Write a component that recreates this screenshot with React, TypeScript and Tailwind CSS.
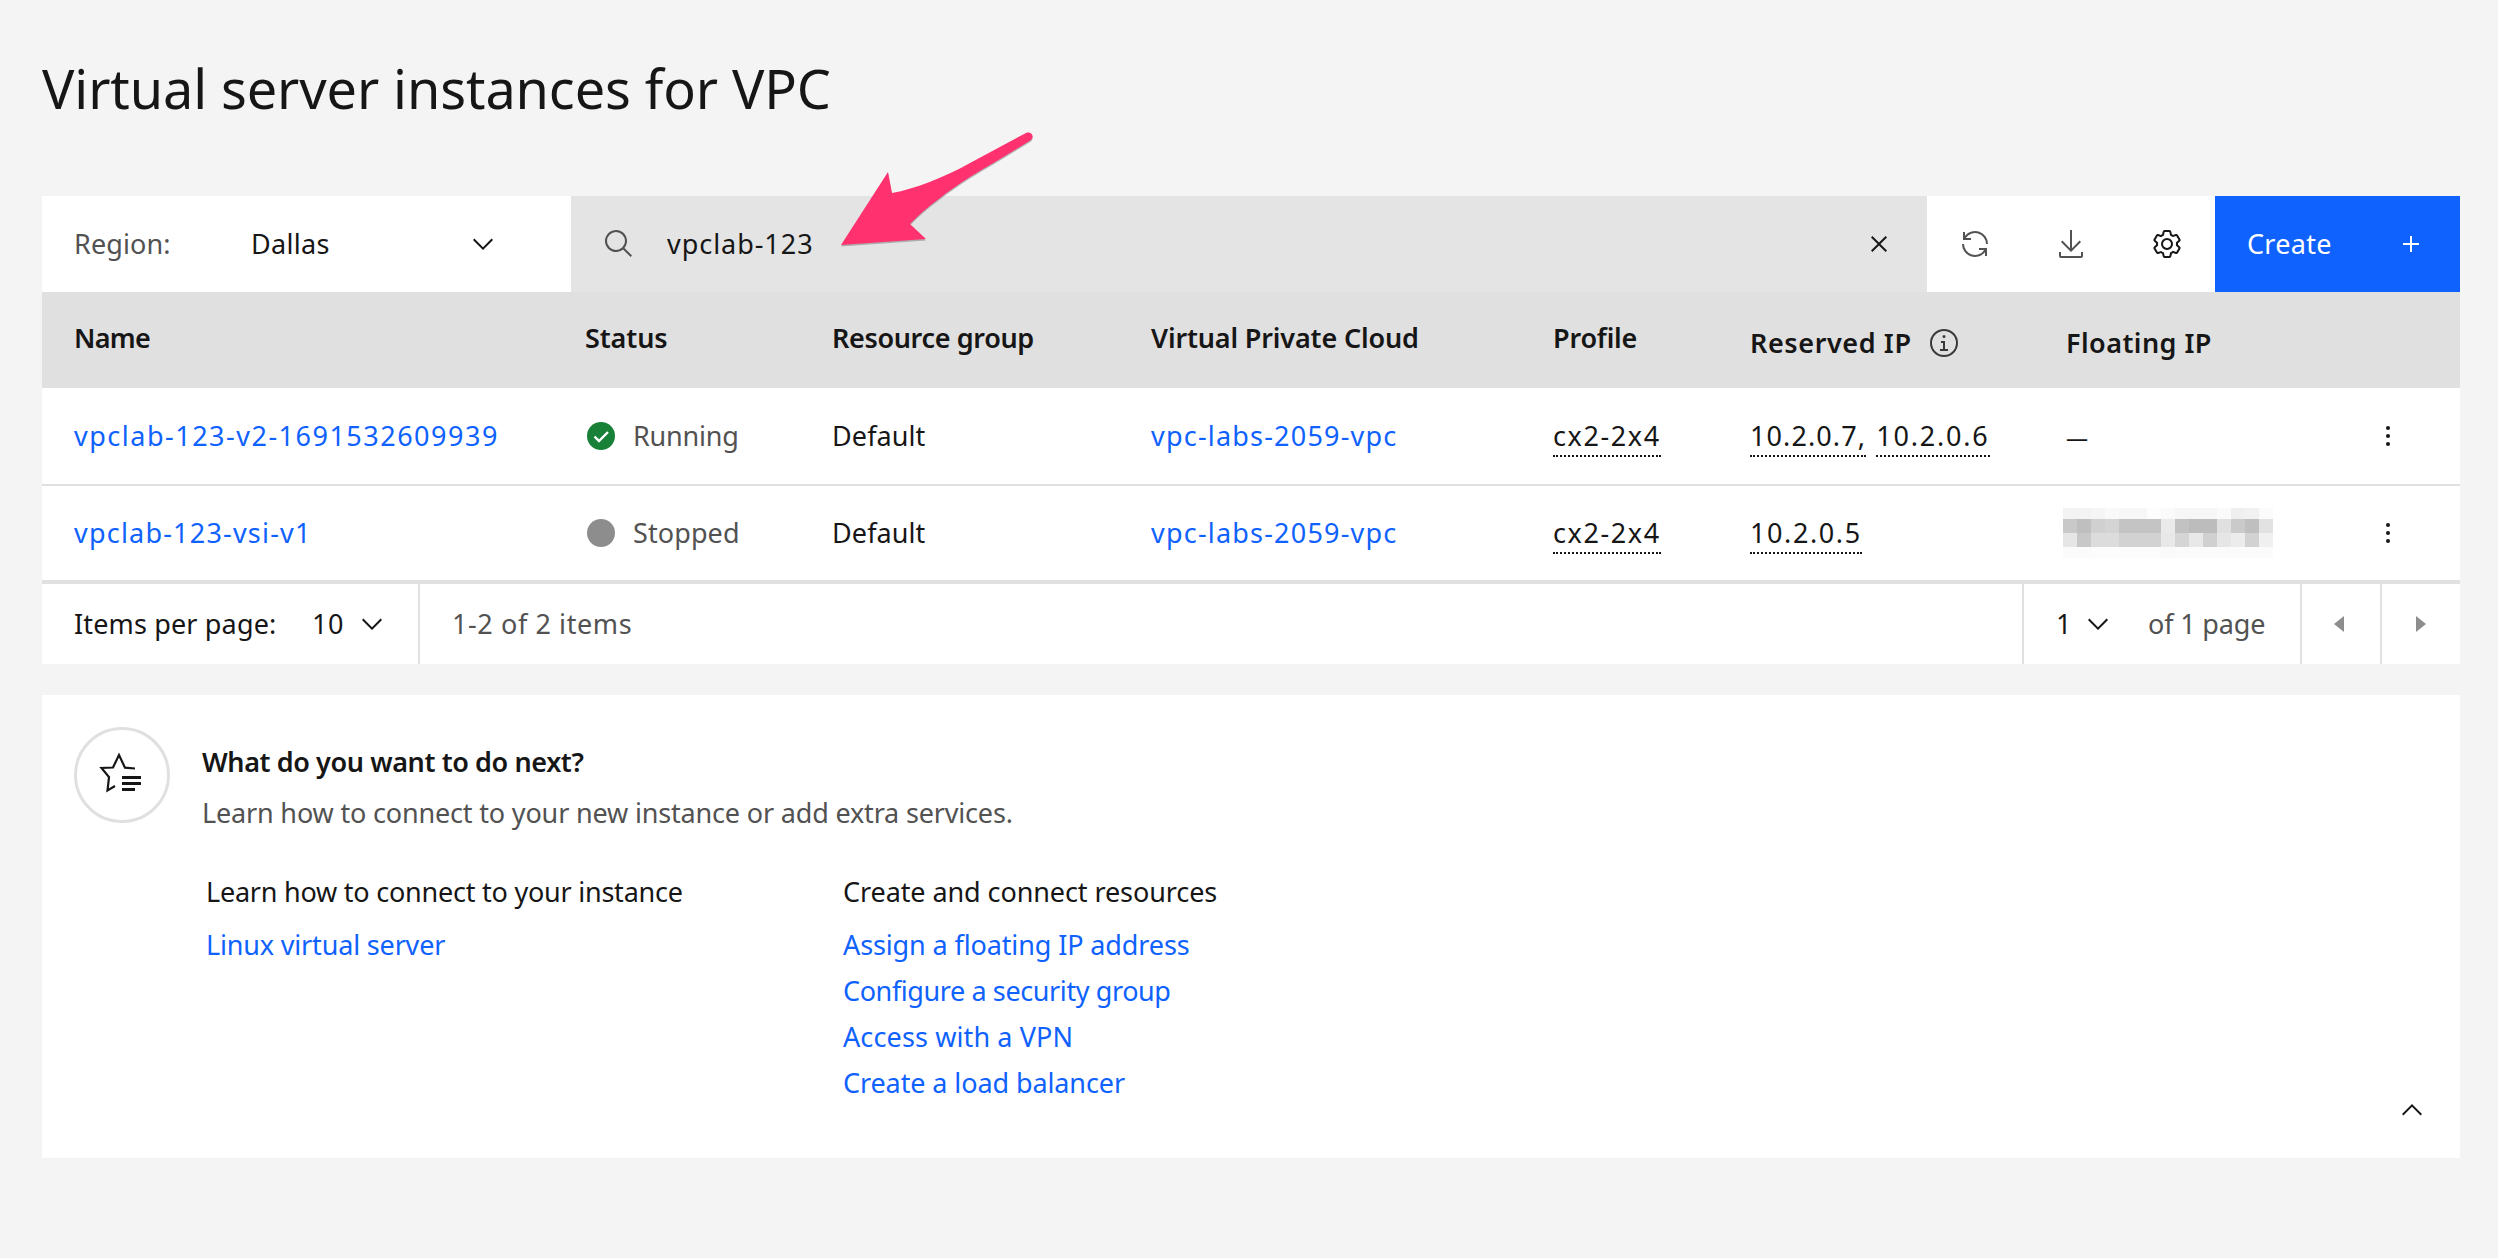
import React from "react";

const paths = {
  search: "M29 27.5859l-7.5521-7.5521a11.0177 11.0177 0 1 0-1.4141 1.4141L27.5859 29ZM4 13a9 9 0 1 1 9 9A9.01 9.01 0 0 1 4 13Z",
  close: "M24 9.4L22.6 8 16 14.6 9.4 8 8 9.4 14.6 16 8 22.6 9.4 24 16 17.4 22.6 24 24 22.6 17.4 16 24 9.4z",
  renew: "M12 10H6.78A11 11 0 0 1 27 16h2A13 13 0 0 0 6 7.68V4H4v8h8zM20 22h5.22A11 11 0 0 1 5 16H3a13 13 0 0 0 23 8.32V28h2v-8h-8z",
  download: "M26 24v4H6v-4H4v4a2 2 0 0 0 2 2h20a2 2 0 0 0 2-2v-4zM26 14l-1.41-1.41L17 20.17V2h-2v18.17l-7.59-7.58L6 14l10 10 10-10z",
  settings:
    "M27 16.76c0-.25 0-.5 0-.76s0-.51 0-.77l1.92-1.68A2 2 0 0 0 29.3 11L26.94 7a2 2 0 0 0-1.73-1 2 2 0 0 0-.64.1l-2.43.82a11.35 11.35 0 0 0-1.31-.75l-.51-2.52a2 2 0 0 0-2-1.61H13.64a2 2 0 0 0-2 1.61l-.51 2.52a11.48 11.48 0 0 0-1.32.75L7.43 6.06A2 2 0 0 0 6.79 6 2 2 0 0 0 5.06 7L2.7 11a2 2 0 0 0 .41 2.51L5 15.24c0 .25 0 .5 0 .76s0 .51 0 .77L3.11 18.45A2 2 0 0 0 2.7 21L5.06 25a2 2 0 0 0 1.73 1 2 2 0 0 0 .64-.1l2.43-.82a11.35 11.35 0 0 0 1.31.75l.51 2.52a2 2 0 0 0 2 1.61h4.72a2 2 0 0 0 2-1.61l.51-2.52a11.48 11.48 0 0 0 1.32-.75l2.42.82a2 2 0 0 0 .64.1 2 2 0 0 0 1.73-1L29.3 21a2 2 0 0 0-.41-2.51ZM25.21 24l-3.43-1.16a8.86 8.86 0 0 1-2.71 1.57L18.36 28H13.64l-.71-3.55a9.36 9.36 0 0 1-2.7-1.57L6.79 24 4.43 20l2.72-2.4a8.9 8.9 0 0 1 0-3.13L4.43 12 6.79 8l3.43 1.16a8.86 8.86 0 0 1 2.71-1.57L13.64 4h4.72l.71 3.55a9.36 9.36 0 0 1 2.7 1.57L25.21 8l2.36 4-2.72 2.4a8.9 8.9 0 0 1 0 3.13L27.57 20ZM16 22a6 6 0 1 1 6-6A5.94 5.94 0 0 1 16 22Zm0-10a3.91 3.91 0 0 0-4 4 3.91 3.91 0 0 0 4 4 3.91 3.91 0 0 0 4-4A3.91 3.91 0 0 0 16 12Z",
  add: "M17 15V8h-2v7H8v2h7v7h2v-7h7v-2z",
  chevronDown: "M16 22L6 12l1.4-1.4 8.6 8.6 8.6-8.6L26 12z",
  chevronUp: "M16 10l10 10-1.4 1.4-8.6-8.6-8.6 8.6L6 20z",
  info: "M17 22v-8h-4v2h2v6h-3v2h8v-2h-3zM16 8a1.5 1.5 0 1 0 1.5 1.5A1.5 1.5 0 0 0 16 8zM16 30a14 14 0 1 1 14-14 14 14 0 0 1-14 14zm0-26a12 12 0 1 0 12 12A12 12 0 0 0 16 4z",
  caretLeft: "M20 24l-10-8 10-8z",
  caretRight: "M12 8l10 8-10 8z",
};

function Icon({ d, size = 32, className = "" }: { d: string; size?: number; className?: string }) {
  return (
    <svg viewBox="0 0 32 32" width={size} height={size} fill="currentColor" className={className}>
      <path d={d} />
    </svg>
  );
}

function Kebab() {
  return (
    <svg viewBox="0 0 32 32" width={32} height={32} fill="#161616">
      <circle cx="16" cy="8" r="2" />
      <circle cx="16" cy="16" r="2" />
      <circle cx="16" cy="24" r="2" />
    </svg>
  );
}

const blurRows = [
  { y: 0, h: 11, c: ["f3", "f3", "f5", "f9", "f7", "f7", "fd", "fa", "f6", "f6", "f6", "fa", "ef", "f1", "fb"] },
  { y: 11, h: 14, c: ["c9", "bf", "d0", "d4", "c4", "c4", "c4", "ea", "c2", "bc", "bc", "e0", "ca", "bf", "e2"] },
  { y: 25, h: 14, c: ["e6", "c8", "dc", "dc", "d2", "d2", "d2", "e8", "d5", "e8", "d0", "e6", "ec", "d2", "f0"] },
  { y: 39, h: 11, c: ["fb", "fb", "fc", "fc", "fc", "fc", "fc", "fa", "fb", "fb", "fb", "fb", "fb", "fb", "fb"] },
];

function Blurred() {
  return (
    <svg width={210} height={50} viewBox="0 0 210 50" shapeRendering="crispEdges" className="block">
      {blurRows.map((r) =>
        r.c.map((g, i) => <rect key={`${r.y}-${i}`} x={i * 14} y={r.y} width={14} height={r.h} fill={`#${g}${g}${g}`} />)
      )}
    </svg>
  );
}

function Dotted({ children, className = "" }: { children: React.ReactNode; className?: string }) {
  return <span className={`border-b-2 border-dotted border-[#161616] pb-[1px] ${className}`}>{children}</span>;
}

const gridCols = "grid grid-cols-[511px_247px_319px_402px_197px_316px_426px] items-center";

function Row({
  name,
  nameClass,
  status,
  ips,
  floating,
  height,
}: {
  name: string;
  nameClass: string;
  status: React.ReactNode;
  ips: React.ReactNode;
  floating: React.ReactNode;
  height: string;
}) {
  return (
    <div className={`${gridCols} ${height} bg-white border-b-[2px] border-[#e0e0e0]`}>
      <div className={`pl-8 text-[#0f62fe] ${nameClass}`}>{name}</div>
      <div className="pl-8">{status}</div>
      <div className="pl-8">Default</div>
      <div className="pl-8 text-[#0f62fe] tracking-[1.2px]">vpc-labs-2059-vpc</div>
      <div className="pl-8">
        <Dotted className="tracking-[1.6px]">cx2-2x4</Dotted>
      </div>
      <div className="pl-8">{ips}</div>
      <div className="pl-8 flex items-center justify-between pr-[56px]">
        {floating}
        <Kebab />
      </div>
    </div>
  );
}

export default function App() {
  return (
    <div
      className="relative min-h-screen bg-[#f4f4f4] text-[#161616] text-[27px] leading-[36px] px-[42px] pt-[52px] tracking-[0.1px]"
      style={{ fontFamily: '"Noto Sans", sans-serif' }}
    >
      <h1 className="text-[54px] leading-[72px] font-normal h-[144px] tracking-[-0.1px]">Virtual server instances for VPC</h1>

      <div className="w-[2418px]">
        <div className="flex h-[96px]">
          <div className="w-[529px] bg-white flex items-center pl-8 pr-[72px]">
            <span className="text-[#525252] w-[177px]">Region:</span>
            <span className="flex-1 tracking-[0.3px]">Dallas</span>
            <Icon d={paths.chevronDown} size={32} />
          </div>
          <div className="w-[1356px] bg-[#e4e4e4] flex items-center pl-8 pr-8">
            <Icon d={paths.search} size={32} className="text-[#525252] mr-[32px]" />
            <span className="flex-1 tracking-[0.95px]">vpclab-123</span>
            <Icon d={paths.close} size={32} />
          </div>
          <div className="w-[288px] bg-white flex">
            <div className="w-[96px] flex items-center justify-center text-[#525252]">
              <Icon d={paths.renew} />
            </div>
            <div className="w-[96px] flex items-center justify-center text-[#525252]">
              <Icon d={paths.download} />
            </div>
            <div className="w-[96px] flex items-center justify-center text-[#161616]">
              <Icon d={paths.settings} />
            </div>
          </div>
          <div className="w-[245px] bg-[#0f62fe] text-white flex items-center justify-between pl-8 pr-[33px]">
            <span className="tracking-[0.3px]">Create</span>
            <Icon d={paths.add} />
          </div>
        </div>

        <div className={`${gridCols} h-[96px] bg-[#e0e0e0] font-semibold`}>
          <div className="pl-8 pb-[5px] tracking-[-0.7px]">Name</div>
          <div className="pl-8 pb-[5px] tracking-[-0.1px]">Status</div>
          <div className="pl-8 pb-[5px] tracking-[-0.35px]">Resource group</div>
          <div className="pl-8 pb-[5px] tracking-[-0.15px]">Virtual Private Cloud</div>
          <div className="pl-8 pb-[5px] tracking-[-0.2px]">Profile</div>
          <div className="pl-8 pt-[6px] flex items-center gap-4 tracking-[0.6px]">
            Reserved IP <Icon d={paths.info} className="text-[#393939]" />
          </div>
          <div className="pl-8 pt-[6px] tracking-[0.45px]">Floating IP</div>
        </div>

        <Row
          height="h-[98px]"
          name="vpclab-123-v2-1691532609939"
          nameClass="tracking-[1.5px]"
          status={
            <span className="flex items-center">
              <svg viewBox="0 0 28 28" width={28} height={28} className="ml-[2px] mr-[18px]">
                <circle cx="14" cy="14" r="14" fill="#198038" />
                <path d="M7.5 14.500l4.500 4.500 9-9" fill="none" stroke="#fff" strokeWidth="2.400" />
              </svg>
              <span className="text-[#525252] tracking-[-0.2px]">Running</span>
            </span>
          }
          ips={
            <span>
              <Dotted className="tracking-[1.1px]">10.2.0.7,</Dotted>{" "}
              <Dotted className="ml-[3px] tracking-[1.8px]">10.2.0.6</Dotted>
            </span>
          }
          floating={<span className="block text-[22px] leading-[36px] pt-[2px] tracking-normal">—</span>}
        />
        <Row
          height="h-[96px]"
          name="vpclab-123-vsi-v1"
          nameClass="tracking-[1.2px]"
          status={
            <span className="flex items-center">
              <span className="w-[28px] h-[28px] rounded-full bg-[#8d8d8d] ml-[2px] mr-[18px]" />
              <span className="text-[#525252]">Stopped</span>
            </span>
          }
          ips={<Dotted className="tracking-[1.6px]">10.2.0.5</Dotted>}
          floating={
            <span className="-ml-[3px]">
              <Blurred />
            </span>
          }
        />

        <div className="flex h-[82px] bg-white border-t-[2px] border-[#e0e0e0]">
          <div className="w-[378px] flex items-center pl-8 border-r-2 border-[#e0e0e0]">
            <span className="w-[238px] tracking-[0.15px]">Items per page:</span>
            <span className="w-[44px] tracking-[0.6px]">10</span>
            <Icon d={paths.chevronDown} size={32} />
          </div>
          <div className="flex-1 flex items-center pl-[32px] text-[#525252] tracking-[0.6px]">1-2 of 2 items</div>
          <div className="w-[278px] flex items-center pl-8 border-l-2 border-[#e0e0e0]">
            <span className="w-[26px]">1</span>
            <Icon d={paths.chevronDown} size={32} />
            <span className="ml-[34px] text-[#525252] tracking-[-0.15px]">of 1 page</span>
          </div>
          <div className="w-[80px] flex items-center justify-center border-l-2 border-[#e0e0e0] text-[#8d8d8d]">
            <Icon d={paths.caretLeft} size={32} className="-ml-[2px]" />
          </div>
          <div className="w-[80px] flex items-center justify-center border-l-2 border-[#e0e0e0] text-[#8d8d8d]">
            <Icon d={paths.caretRight} size={32} className="-ml-[2px]" />
          </div>
        </div>

        <div className="relative mt-[31px] h-[463px] bg-white p-8">
          <div className="flex">
            <div className="w-[96px] h-[96px] rounded-full border-[3px] border-[#e0e0e0] flex items-center justify-center">
              <svg viewBox="0 0 48 48" width={48} height={48} fill="none">
                <path d="M37 17.500l-10-.8L21 4l-6 12.500L3.500 17l7.500 9-1.500 13.500L17 35" stroke="#161616" strokeWidth="2.200" />
                <rect x="24" y="25" width="19" height="3" fill="#161616" />
                <rect x="24" y="31" width="19" height="3" fill="#161616" />
                <rect x="24" y="37" width="13" height="3" fill="#161616" />
              </svg>
            </div>
            <div className="ml-8 mt-[17px]">
              <div className="font-semibold tracking-[-0.4px]">What do you want to do next?</div>
              <div className="mt-[15px] text-[#525252] tracking-[-0.17px]">Learn how to connect to your new instance or add extra services.</div>
            </div>
          </div>
          <div className="flex mt-[43px] ml-[132px]">
            <div className="w-[637px]">
              <div className="tracking-[-0.23px]">Learn how to connect to your instance</div>
              <div className="mt-[17px] text-[#0f62fe] tracking-[-0.17px]">Linux virtual server</div>
            </div>
            <div>
              <div className="tracking-[-0.09px]">Create and connect resources</div>
              <div className="mt-[17px] flex flex-col gap-[10px] text-[#0f62fe]">
                <span className="tracking-[-0.12px]">Assign a floating IP address</span>
                <span className="tracking-[-0.4px]">Configure a security group</span>
                <span className="tracking-[0.12px]">Access with a VPN</span>
                <span className="tracking-[-0.1px]">Create a load balancer</span>
              </div>
            </div>
          </div>
          <Icon d={paths.chevronUp} className="absolute right-[32px] bottom-[32px]" />
        </div>
      </div>

      <svg className="absolute left-[830px] top-[125px]" width={220} height={130} viewBox="830 125 220 130" fill="none">
        <path
          d="M841 245L888 172L892 193C915 189 945 177 970 163L1026 133C1031 131 1035 136 1031 140C1010 153 990 165 970 177C950 190 925 208 910 224L926 239Z"
          fill="#6b6b6b"
          opacity="0.45"
          transform="translate(0 1.500)"
        />
        <path
          d="M841 245L888 172L892 193C915 189 945 177 970 163L1026 133C1031 131 1035 136 1031 140C1010 153 990 165 970 177C950 190 925 208 910 224L926 239Z"
          fill="#ff316f"
        />
      </svg>
    </div>
  );
}
